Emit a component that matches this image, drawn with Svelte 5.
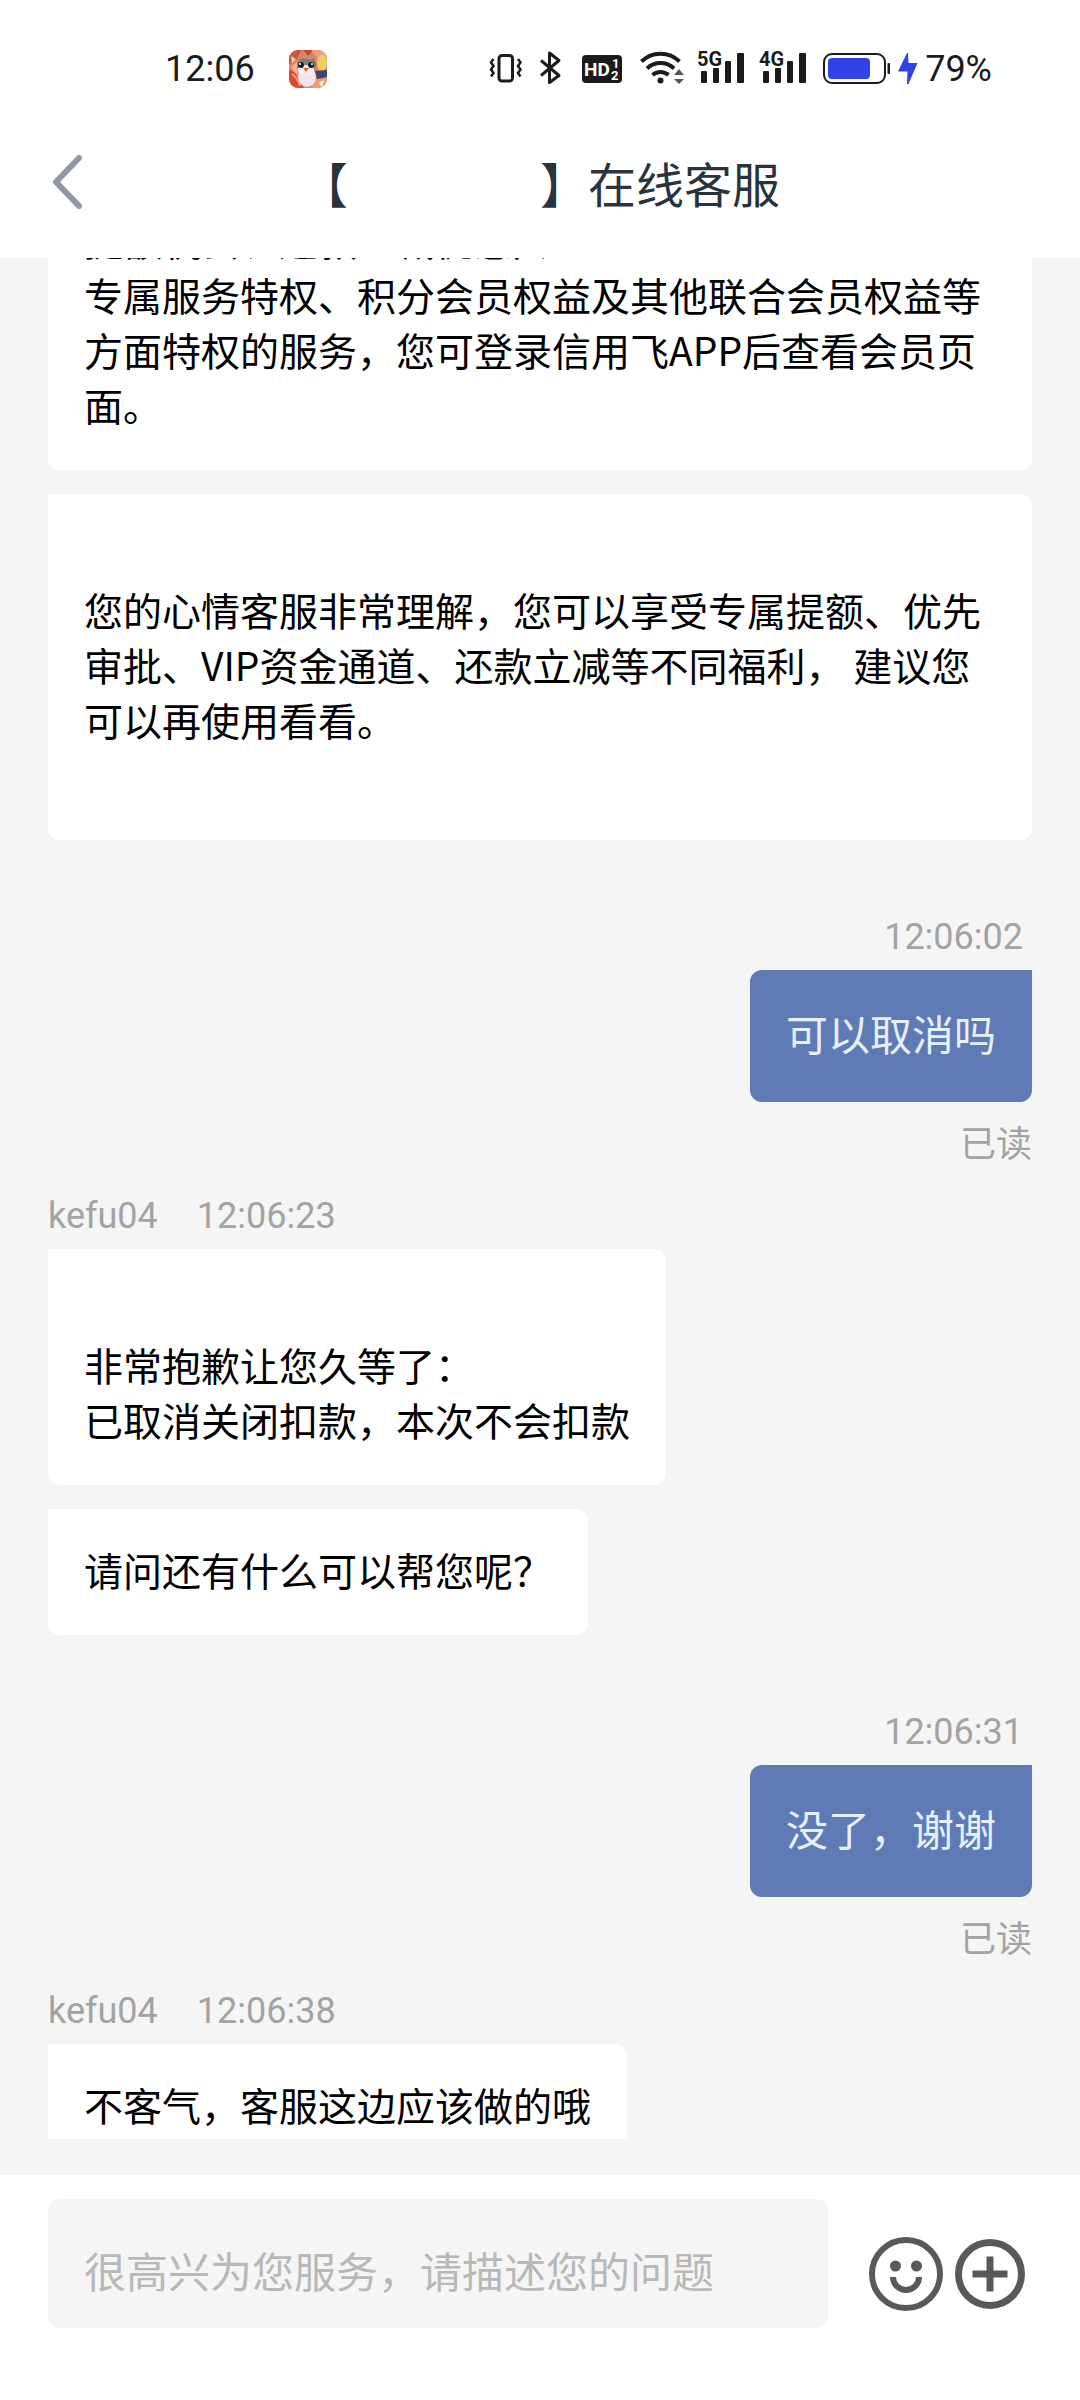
<script lang="ts">
  type Message = {
    from: 'agent' | 'me';
    name?: string;
    time?: string;
    texts: string[];
    read?: boolean;
  };

  const messages: Message[] = [
    {
      from: 'agent',
      texts: [
        '提额机会、还款立减优惠）、\n专属服务特权、积分会员权益及其他联合会员权益等方面特权的服务，您可登录信用飞APP后查看会员页面。',
        '\n您的心情客服非常理解，您可以享受专属提额、优先审批、VIP资金通道、还款立减等不同福利， 建议您可以再使用看看。\n\u200b'
      ]
    },
    { from: 'me', time: '12:06:02', texts: ['可以取消吗'], read: true },
    {
      from: 'agent',
      name: 'kefu04',
      time: '12:06:23',
      texts: ['\n非常抱歉让您久等了：\n已取消关闭扣款，本次不会扣款', '请问还有什么可以帮您呢？']
    },
    { from: 'me', time: '12:06:31', texts: ['没了，谢谢'], read: true },
    { from: 'agent', name: 'kefu04', time: '12:06:38', texts: ['不客气，客服这边应该做的哦'] }
  ];

  const signals = ['5G', '4G'];
  const title = '【\u3000\u3000\u3000\u3000】在线客服';

  let list: HTMLElement | undefined = $state();
  let draft = $state('');

  $effect(() => {
    if (list) list.scrollTop = 79;
  });
</script>

<div class="app">
  <div class="status">
    <span>12:06</span>
    <svg class="game" width="38" height="38" viewBox="0 0 38 38" aria-hidden="true">
      <defs><clipPath id="tile"><rect width="38" height="38" rx="9" /></clipPath></defs>
      <g clip-path="url(#tile)">
        <rect width="38" height="38" fill="#dd8468" />
        <path d="M0 0h12l-4 9-8 5z" fill="#c9573c" />
        <path d="M14 0l5 6 6-6z" fill="#c9462f" />
        <path d="M22 0h16v12l-9-3z" fill="#eda07a" />
        <path d="M3 16l5-4 3 9-6 6z" fill="#f0b295" />
        <path d="M2 6l5 3-4 4z" fill="#f6cdb8" />
        <ellipse cx="33" cy="13" rx="5" ry="8" fill="#f2cf62" />
        <path d="M26 21l12-1v8l-10 1z" fill="#3b4377" />
        <path d="M0 20q7 0 9 9l6 9H0z" fill="#dd4a33" />
        <path d="M3 24q5 3 8 12" fill="none" stroke="#f59a76" stroke-width="2" />
        <path d="M25 30l13-3v11H22z" fill="#f09a72" />
        <path d="M30 33l5-3-2 7z" fill="#fff" />
        <path d="M8 17q0-10 10-10t9 9l-2 4H9z" fill="#8b7c72" />
        <path d="M13 8l4-4 1 3 5-3v6z" fill="#b99b6e" />
        <ellipse cx="18" cy="27" rx="9" ry="10" fill="#f4e4ec" />
        <ellipse cx="17" cy="20" rx="8" ry="5" fill="#f7f1f3" />
        <circle cx="12" cy="15" r="3" fill="#1b1d33" />
        <circle cx="22" cy="15" r="3" fill="#1b1d33" />
        <circle cx="11" cy="14" r="1" fill="#fff" />
        <circle cx="23" cy="14" r="1" fill="#fff" />
        <path d="M14 18h6l-3 4z" fill="#ea5a1c" />
      </g>
    </svg>
    <div class="icons">
      <svg width="32" height="40" viewBox="490 49 32 40" fill="none" stroke="#1b1b1b" aria-hidden="true">
        <rect x="499" y="55.500" width="13.500" height="25.500" rx="3" stroke-width="3" />
        <path d="M493.500 59l-2.500 3.500 2.500 3.500-2.500 3.500 2.500 3.500-2.500 3.500M518 59l2.500 3.500-2.500 3.500 2.500 3.500-2.500 3.500 2.500 3.500" stroke-width="2.500" />
      </svg>
      <svg width="26" height="40" viewBox="538 49 26 40" fill="none" stroke="#1b1b1b" stroke-width="3" stroke-linejoin="round" aria-hidden="true">
        <path d="M541 60.500L559 75.500 549.500 82.500V53L559 60.500 541 75.500" />
      </svg>
      <svg width="44" height="40" viewBox="580 49 44 40" aria-hidden="true">
        <rect x="582" y="55" width="40" height="28" rx="4" fill="#1b1b1b" />
        <g fill="#fff" font-family="Roboto, sans-serif" font-weight="700">
          <text x="584" y="76" font-size="19">HD</text>
          <text x="612" y="68" font-size="13">1</text>
          <text x="611" y="80" font-size="13">2</text>
        </g>
      </svg>
      <svg width="43" height="40" viewBox="640 49 43 40" fill="none" stroke="#1b1b1b" stroke-width="4" aria-hidden="true">
        <path d="M641.500 61.500a27 27 0 0 1 38 0M647 68.500a19.500 19.500 0 0 1 27 0M652.500 75a12 12 0 0 1 16 0" />
        <circle cx="660.500" cy="80.500" r="3" fill="#1b1b1b" stroke="none" />
        <path d="M674 75l5-6 5 6zM674 79h10l-5 5z" fill="#555" stroke="none" />
      </svg>
      {#each signals as label}
        <svg width="46" height="40" viewBox="699 49 46 40" fill="#1b1b1b" aria-label={label}>
          <text x="697" y="66" font-family="Roboto, sans-serif" font-weight="700" font-size="20">{label}</text>
          <rect x="701" y="71" width="6" height="12" rx="1" />
          <rect x="713" y="68" width="6" height="15" rx="1" />
          <rect x="725" y="61" width="6" height="22" rx="1" />
          <rect x="737" y="53" width="7" height="30" rx="1" />
        </svg>
      {/each}
      <div class="charge">
        <svg width="68" height="40" viewBox="823 49 68 40" aria-label="电量">
          <rect x="824" y="54" width="61" height="29" rx="8" fill="none" stroke="#1b1b1b" stroke-width="2" />
          <rect x="828" y="58" width="42" height="21" rx="4" fill="#2f43e8" />
          <rect x="887.500" y="63" width="2.500" height="11" rx="1" fill="#1b1b1b" />
        </svg>
        <svg width="20" height="40" viewBox="898 49 20 40" fill="#2f43e8" aria-hidden="true">
          <path d="M907 53L898 71.500h9.500L907 84h1.500l9-21h-9l-.5-10z" />
        </svg>
        <span>79%</span>
      </div>
    </div>
  </div>

  <header>
    <button class="plain back" aria-label="返回">
      <svg width="32" height="56" viewBox="0 0 32 56" fill="none" stroke="#9397a5" stroke-width="6" stroke-linecap="round" stroke-linejoin="round">
        <path d="M27 4L4 28 27 52" />
      </svg>
    </button>
    <h1>{title}</h1>
  </header>

  <main>
    <div class="list" bind:this={list}>
      {#each messages as m}
        <section class={m.from}>
          {#if m.time}
            <div class="meta">
              {#if m.name}<span>{m.name}</span>{/if}
              <time>{m.time}</time>
            </div>
          {/if}
          <div class="bubbles">
            {#each m.texts as text}
              <p>{text}</p>
            {/each}
          </div>
          {#if m.read}<div class="read">已读</div>{/if}
        </section>
      {/each}
    </div>
  </main>

  <footer>
    <input type="text" aria-label="消息" placeholder="很高兴为您服务，请描述您的问题" bind:value={draft} />
    <div class="actions">
      <button class="plain" aria-label="表情">
        <svg width="74" height="74" viewBox="0 0 74 74" fill="none" stroke="#595959" stroke-width="6">
          <circle cx="37" cy="37" r="34" />
          <path d="M24 40a13 13 0 0 0 26 0" />
          <circle cx="26.500" cy="29" r="5.500" fill="#595959" stroke="none" />
          <circle cx="47.500" cy="29" r="5.500" fill="#595959" stroke="none" />
        </svg>
      </button>
      <button class="plain" aria-label="更多">
        <svg width="70" height="70" viewBox="0 0 70 70" fill="none" stroke="#595959" stroke-width="7">
          <circle cx="35" cy="35" r="31.500" />
          <path d="M35 17.500v35M17.500 35h35" />
        </svg>
      </button>
    </div>
  </footer>
</div>

<style>
  :global(body) {
    margin: 0;
  }
  .app {
    display: flex;
    flex-direction: column;
    height: 100vh;
    background: #fff;
    color: #000;
    font-family: 'Noto Sans CJK SC', sans-serif;
  }
  svg {
    display: block;
    flex: none;
    overflow: visible;
  }
  .plain {
    padding: 0;
    border: 0;
    background: none;
  }
  .status {
    display: flex;
    align-items: center;
    box-sizing: border-box;
    height: 110px;
    padding: 28px 88px 0 165px;
    color: #1b1b1b;
    font: 36px/40px Roboto, sans-serif;
  }
  .game {
    margin-left: 34px;
  }
  .icons {
    display: flex;
    align-items: center;
    gap: 16px;
    margin-left: auto;
  }
  .charge {
    display: flex;
    gap: 7px;
  }
  header {
    display: grid;
    grid-template-columns: 96px 1fr 96px;
    align-items: center;
    box-sizing: border-box;
    height: 148px;
    padding-bottom: 4px;
  }
  .back {
    justify-self: end;
    padding-right: 12px;
  }
  h1 {
    margin: 0;
    color: #29333d;
    font-size: 48px;
    font-weight: 400;
    line-height: 64px;
    text-align: center;
    white-space: pre;
  }
  main {
    display: flex;
    flex: 1;
    min-height: 0;
    padding-bottom: 36px;
    background: #f5f5f5;
  }
  .list {
    flex: 1;
    overflow-y: auto;
    padding: 0 48px 48px;
    scrollbar-width: none;
  }
  section {
    display: flex;
    flex-direction: column;
    align-items: flex-start;
  }
  .me {
    align-items: flex-end;
    margin: 75px 0 27px;
  }
  .meta,
  .read {
    color: #a3a3a3;
    font: 36px/44px Roboto, 'Noto Sans CJK SC', sans-serif;
  }
  .meta {
    display: flex;
    gap: 39px;
    margin-bottom: 11px;
  }
  .me .meta {
    padding-right: 9px;
  }
  .read {
    margin-top: 21px;
  }
  .bubbles {
    display: flex;
    flex-direction: column;
    align-items: flex-start;
    gap: 24px;
  }
  p {
    margin: 0;
    padding: 33px 36px 38px;
    border-radius: 0 12px 12px 12px;
    background: #fff;
    font-size: 39px;
    line-height: 55px;
    white-space: pre-wrap;
  }
  .me p {
    padding: 33px 36px 39px;
    border-radius: 12px 0 12px 12px;
    background: #5e7bb5;
    color: #e6f0ff;
    font-size: 42px;
    line-height: 60px;
  }
  footer {
    display: flex;
    align-items: flex-start;
    gap: 41px;
    padding: 24px 55px 72px 48px;
  }
  input {
    flex: 1;
    box-sizing: border-box;
    min-width: 0;
    height: 129px;
    padding: 12px 36px 0;
    border: 0;
    border-radius: 12px;
    background: #f5f5f5;
    color: #000;
    font: 42px 'Noto Sans CJK SC', sans-serif;
  }
  input::placeholder {
    color: #b8b8b8;
  }
  .actions {
    display: flex;
    align-items: center;
    gap: 12px;
    padding-top: 38px;
  }
</style>
